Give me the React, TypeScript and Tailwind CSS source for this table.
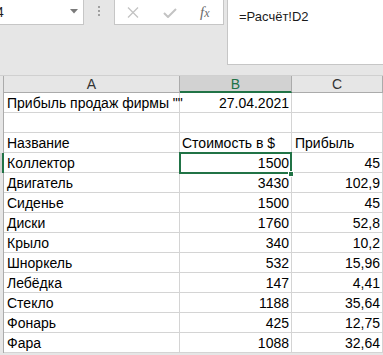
import React from "react";

const rows: [string, string, string][] = [
  ["Прибыль продаж фирмы \"\"", "27.04.2021", ""],
  ["", "", ""],
  ["Название", "Стоимость в $", "Прибыль"],
  ["Коллектор", "1500", "45"],
  ["Двигатель", "3430", "102,9"],
  ["Сиденье", "1500", "45"],
  ["Диски", "1760", "52,8"],
  ["Крыло", "340", "10,2"],
  ["Шноркель", "532", "15,96"],
  ["Лебёдка", "147", "4,41"],
  ["Стекло", "1188", "35,64"],
  ["Фонарь", "425", "12,75"],
  ["Фара", "1088", "32,64"],
];

export default function App() {
  return (
    <div
      className="relative w-[383px] h-[355px] overflow-hidden bg-[#e6e6e6] text-black"
      style={{ fontFamily: '"Liberation Sans", Arial, sans-serif' }}
    >
      {/* Formula bar area */}
      <div className="flex h-[75px] items-start">
        <div className="relative w-[84px] h-[25px] bg-white border-r border-b border-[#c6c6c6] overflow-hidden">
          <span className="absolute left-[-4px] top-[4px] text-[14px] leading-[16px] text-[#1f1f1f]">
            4
          </span>
          <svg className="absolute left-[70px] top-[9px]" width="8" height="5" viewBox="0 0 8 5">
            <path d="M0 0 H8 L4 4.5 Z" fill="#7a7a7a" />
          </svg>
        </div>
        <div className="w-[30px] h-[25px] flex flex-col items-center pt-[6px] gap-[2px]">
          <div className="w-[2px] h-[2px] bg-[#a0a0a0]" />
          <div className="w-[2px] h-[2px] bg-[#a0a0a0]" />
          <div className="w-[2px] h-[2px] bg-[#a0a0a0]" />
        </div>
        <div className="relative w-[110px] h-[25px] bg-white border-l border-r border-b border-[#c6c6c6]">
          <svg className="absolute left-[12px] top-[7px]" width="12" height="11" viewBox="0 0 12 11">
            <path d="M1 0.5 L11 10.5 M11 0.5 L1 10.5" stroke="#c3c3c3" strokeWidth="1.3" fill="none" />
          </svg>
          <svg className="absolute left-[48px] top-[8px]" width="14" height="10" viewBox="0 0 14 10">
            <path d="M1 5 L5 9 L13 1" stroke="#c3c3c3" strokeWidth="2" fill="none" />
          </svg>
          <span
            className="absolute left-[85px] top-[4px] text-[15px] leading-[16px] italic text-[#6b6b6b]"
            style={{ fontFamily: '"Liberation Serif", "Times New Roman", serif' }}
          >
            f<span className="text-[12px]">x</span>
          </span>
        </div>
        <div className="w-[3px]" />
        <div className="flex-1 h-[65px] bg-white border-l border-b border-[#c6c6c6] pl-[11px] pt-[4px]">
          <span className="text-[13px] leading-[16px] text-[#1a1a1a]">=Расчёт!D2</span>
        </div>
      </div>

      {/* Column headers */}
      <div className="flex h-[18px] border-t border-[#d0d0d0] text-[14px] leading-[16px]">
        <div className="w-[4px] border-r border-[#ababab]" />
        <div className="w-[176px] border-r border-b border-[#ababab] flex items-center justify-center text-[#333]">
          A
        </div>
        <div className="w-[112px] bg-[#d2d2d2] border-r border-[#ababab] border-b-2 border-b-[#217346] flex items-center justify-center text-[#217346]">
          B
        </div>
        <div className="w-[91px] border-r border-b border-[#ababab] flex items-center justify-center text-[#333]">
          C
        </div>
      </div>

      {/* Grid rows */}
      <div className="bg-white">
        {rows.map((r, i) => (
          <div key={i} className="flex h-[20px] text-[14px] leading-[16px]">
            <div
              className={
                i === 3
                  ? "w-[4px] bg-[#d2d2d2] border-r-2 border-[#217346]"
                  : "w-[4px] bg-[#e6e6e6] border-r border-[#ababab]"
              }
            />
            <div className="w-[176px] border-r border-b border-[#d4d4d4] flex items-end pl-[3px] pb-[1px] whitespace-nowrap overflow-visible">
              {r[0]}
            </div>
            <div
              className={
                "w-[112px] border-r border-b border-[#d4d4d4] flex items-end pb-[1px] pr-[2px] whitespace-nowrap " +
                (i === 2 ? "justify-start pl-[2px]" : "justify-end")
              }
            >
              {r[1]}
            </div>
            <div
              className={
                "w-[91px] border-r border-b border-[#d4d4d4] flex items-end pb-[1px] pr-[2px] whitespace-nowrap " +
                (i === 2 ? "justify-start pl-[3px]" : "justify-end")
              }
            >
              {r[2]}
            </div>
          </div>
        ))}
      </div>

      {/* Selection */}
      <div className="absolute left-[179px] top-[152px] w-[113px] h-[22px] border-2 border-[#217346] pointer-events-none" />
      <div className="absolute left-[288px] top-[171px] w-[6px] h-[6px] bg-[#217346] border border-white" />
    </div>
  );
}
